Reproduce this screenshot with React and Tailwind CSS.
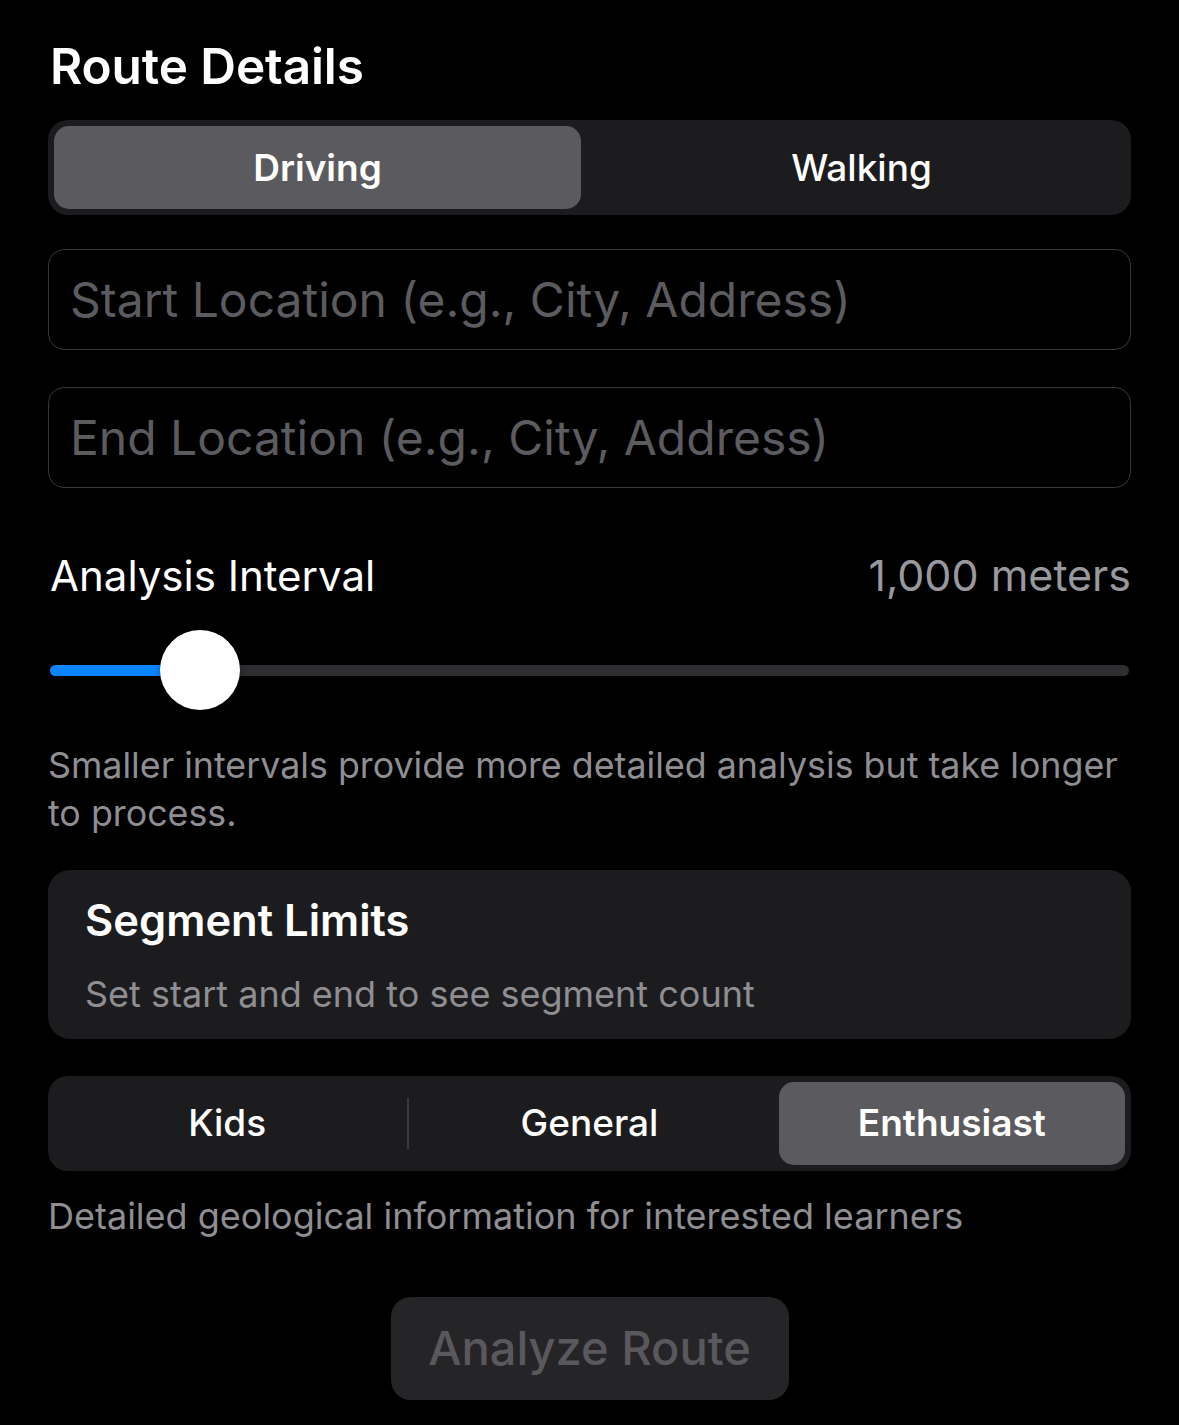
import React from "react";

export default function App() {
  return (
    <div className="min-h-[1425px] w-full bg-black text-white" style={{ fontFamily: "Inter, 'Noto Sans', sans-serif" }}>
      <div className="px-[48px] pt-[36px]">
        <h1 className="pl-[2px] text-[49.5px] font-semibold leading-[60px] tracking-[-0.1px]">Route Details</h1>

        <div className="mt-[24px] flex h-[95px] gap-[17px] rounded-[20px] bg-[#1c1c1e] p-[6px]">
          <div className="flex flex-1 items-center justify-center rounded-[15px] bg-[#5b5b5f] text-[37px] font-semibold">Driving</div>
          <div className="flex flex-1 items-center justify-center text-[37px] font-medium">Walking</div>
        </div>

        <div className="mt-[34px] flex h-[101px] items-center rounded-[16px] border border-[#38383a] px-[21px]">
          <span className="text-[48px] text-[#5b5b60]">Start Location (e.g., City, Address)</span>
        </div>
        <div className="mt-[37px] flex h-[101px] items-center rounded-[16px] border border-[#38383a] px-[21px]">
          <span className="text-[48px] text-[#5b5b60]">End Location (e.g., City, Address)</span>
        </div>

        <div className="mt-[55px] flex items-center justify-between">
          <span className="pl-[2px] text-[42px]">Analysis Interval</span>
          <span className="text-[43px] text-[#98989e]">1,000 meters</span>
        </div>

        <div className="relative mt-[22px] h-[80px]">
          <div className="absolute left-[2px] right-[2px] top-[35px] h-[11px] rounded-full bg-[#2e2e30]"></div>
          <div className="absolute left-[2px] top-[35px] h-[11px] w-[150px] rounded-full bg-[#0a84ff]"></div>
          <div className="absolute left-[112px] top-0 h-[80px] w-[80px] rounded-full bg-white shadow-[0_2px_6px_rgba(0,0,0,0.3)]"></div>
        </div>

        <p className="mt-[31px] text-[35.8px] leading-[48px] text-[#8e8e93]">
          Smaller intervals provide more detailed analysis but take longer to process.
        </p>

        <div className="mt-[33px] rounded-[22px] bg-[#1c1c1e] px-[37px] pb-[22px] pt-[22px]">
          <div className="text-[43.5px] font-semibold leading-[56px]">Segment Limits</div>
          <div className="mt-[23px] text-[36px] leading-[46px] text-[#8e8e93]">Set start and end to see segment count</div>
        </div>

        <div className="mt-[37px] flex h-[95px] items-stretch rounded-[20px] bg-[#1c1c1e] p-[6px]">
          <div className="flex flex-1 items-center justify-center text-[37px] font-medium">Kids</div>
          <div className="flex w-[16px] justify-center py-[16px]">
            <div className="w-[2px] bg-[#3a3a3c]"></div>
          </div>
          <div className="flex flex-1 items-center justify-center text-[37px] font-medium">General</div>
          <div className="w-[16px]"></div>
          <div className="flex flex-1 items-center justify-center rounded-[15px] bg-[#5b5b5f] text-[37px] font-semibold">Enthusiast</div>
        </div>

        <p className="mt-[21px] text-[36px] leading-[48px] text-[#8e8e93]">
          Detailed geological information for interested learners
        </p>

        <div className="mt-[57px] flex justify-center">
          <div className="flex h-[103px] w-[398px] items-center justify-center rounded-[20px] bg-[#252527] text-[47px] font-medium text-[#59595d]">
            Analyze Route
          </div>
        </div>
      </div>
    </div>
  );
}
